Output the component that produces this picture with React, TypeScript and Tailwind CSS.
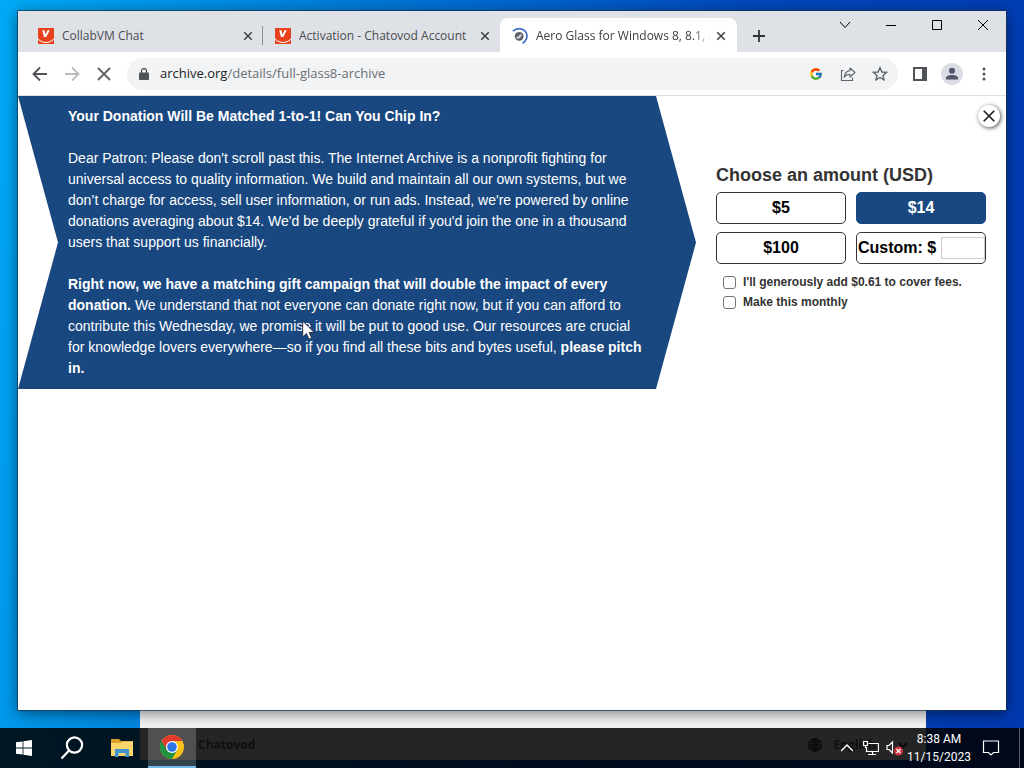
import type { ReactNode } from "react";
import { FcGoogle } from "react-icons/fc";

function ChatovodIcon() {
  return (
    <svg className="h-4 w-4 shrink-0" viewBox="0 0 16 16" aria-hidden="true">
      <rect width="16" height="16" fill="#e8421c" />
      <path d="M0 10.2C4 15.2 12 15.2 16 10.2L16 11.6C12 16.2 4 16.2 0 11.6Z" fill="#fff" />
      <path d="M4.200 2.200H6.500L7.400 6.400L9.600 2.200H11.800L8.200 9H6Z" fill="#fff" />
    </svg>
  );
}

function LoadingIcon() {
  return (
    <svg className="h-4 w-4 shrink-0" viewBox="0 0 16 16" fill="none" aria-hidden="true">
      <path d="M1 3.2C5 -.8 11.500 .2 13.900 4.200C16 8 14.800 13 10.500 15.200" stroke="#3567c8" strokeWidth="1.600" />
      <circle cx="7.200" cy="8.300" r="4.400" fill="#5b6068" />
      <path d="M4.600 10.800C3.600 8.800 5.400 8.900 6.600 8.300C7.600 7.600 7 6.600 8.600 6.200C10 6.200 10.400 7.200 9.400 8C8.400 8.400 8.600 9.600 7.800 10.200Z" fill="#d5d9df" />
    </svg>
  );
}

function Cross({ className, width = 1.8 }: { className: string; width?: number }) {
  return (
    <svg className={className} viewBox="0 0 16 16" fill="none" stroke="currentColor" strokeWidth={width} aria-hidden="true">
      <path d="M2 2L14 14M14 2L2 14" />
    </svg>
  );
}

function Tab({ icon, title, active, divider }: { icon: ReactNode; title: string; active?: boolean; divider?: boolean }) {
  return (
    <div
      role="tab"
      aria-selected={!!active}
      className={
        active
          ? "relative flex h-[34px] w-[237px] items-center gap-2 rounded-t-lg bg-white pt-[2px] pr-[10px] pl-3 text-[#3c4043]"
          : "relative flex h-[34px] w-[237px] items-center gap-2 pt-[2px] pr-[9px] pl-3 text-[#4a4d51]"
      }
    >
      {icon}
      <span
        className={
          active
            ? "-mr-1 min-w-0 flex-1 overflow-hidden text-xs whitespace-nowrap [mask-image:linear-gradient(to_right,black_90%,transparent)]"
            : "min-w-0 flex-1 overflow-hidden text-xs whitespace-nowrap"
        }
      >
        {title}
      </span>
      <button aria-label="Close tab" className="flex h-3 w-3 items-center justify-center text-[#3c4043]">
        <Cross className="h-[10px] w-[10px]" width={2.4} />
      </button>
      {divider && <span className="absolute top-2 right-0 h-[19px] w-px bg-[#8a8d91]" />}
    </div>
  );
}

function CaptionButton({ label, children }: { label: string; children: ReactNode }) {
  return (
    <button aria-label={label} className="flex h-[27px] w-[46px] items-center justify-center text-black">
      <svg className="h-3 w-3" viewBox="0 0 12 12" fill="none" stroke="currentColor" strokeWidth="1" aria-hidden="true">
        {children}
      </svg>
    </button>
  );
}

function TabStrip() {
  return (
    <div className="flex h-[41px] items-start justify-between bg-[#dee1e6]">
      <div className="flex items-center self-end pl-2" role="tablist">
        <Tab icon={<ChatovodIcon />} title="CollabVM Chat" divider />
        <Tab icon={<ChatovodIcon />} title="Activation - Chatovod Account" />
        <Tab icon={<LoadingIcon />} title="Aero Glass for Windows 8, 8.1, and 10" active />
        <button aria-label="New tab" className="ml-2 flex h-7 w-7 items-center justify-center pt-[2px] text-[#2f3236]">
          <svg className="h-3 w-3" viewBox="0 0 12 12" stroke="currentColor" strokeWidth="1.800" aria-hidden="true">
            <path d="M6 0V12M0 6H12" />
          </svg>
        </button>
      </div>
      <div className="flex">
        <CaptionButton label="Search tabs">
          <path d="M1 3L6 8.500L11 3" />
        </CaptionButton>
        <CaptionButton label="Minimize">
          <path d="M1 6.500H11" />
        </CaptionButton>
        <CaptionButton label="Maximize">
          <path d="M1.500 1.500H10.500V10.500H1.500Z" />
        </CaptionButton>
        <CaptionButton label="Close">
          <path d="M1 1L11 11M11 1L1 11" />
        </CaptionButton>
      </div>
    </div>
  );
}

function ToolButton({ label, children }: { label: string; children: ReactNode }) {
  return (
    <button aria-label={label} className="flex h-8 w-8 shrink-0 items-center justify-center text-[#5f6368]">
      {children}
    </button>
  );
}

function Toolbar() {
  return (
    <div className="flex h-11 items-center border-b border-[#dcdfe3] bg-white px-[6px]">
      <ToolButton label="Back">
        <svg className="h-4 w-4" viewBox="0 0 16 16" fill="none" stroke="#505357" strokeWidth="1.800" aria-hidden="true">
          <path d="M15 8H2M8 1.500L1.500 8L8 14.500" />
        </svg>
      </ToolButton>
      <ToolButton label="Forward">
        <svg className="h-4 w-4" viewBox="0 0 16 16" fill="none" stroke="#babcbe" strokeWidth="1.800" aria-hidden="true">
          <path d="M1 8H14M8 1.500L14.500 8L8 14.500" />
        </svg>
      </ToolButton>
      <ToolButton label="Stop loading">
        <Cross className="h-4 w-4" width={1.8} />
      </ToolButton>
      <div className="ml-[7px] flex h-8 min-w-0 flex-1 items-center rounded-full bg-[#f1f3f4] pl-3">
        <svg className="h-3 w-[10px] shrink-0" viewBox="0 0 10 12" aria-hidden="true">
          <path d="M2.500 5V3A2.500 2.500 0 0 1 7.500 3V5" fill="none" stroke="#505357" strokeWidth="1.300" />
          <rect y="4.500" width="10" height="7.500" rx="1" fill="#505357" />
        </svg>
        <a href="#page" className="ml-[11px] flex-1 truncate text-[13px] text-[#6a6e73]">
          <span className="text-[#202124]">archive.org</span>/details/full-glass8-archive
        </a>
        <ToolButton label="Search with Google">
          <FcGoogle className="h-[14px] w-[14px]" />
        </ToolButton>
        <ToolButton label="Share">
          <svg className="h-4 w-4" viewBox="0 0 16 16" fill="none" stroke="currentColor" strokeWidth="1.100" aria-hidden="true">
            <path d="M3.500 4.500H1.500V14.500H12.500V11.500" />
            <path d="M10 2L15 6.500L10 11V8.300C7 8.300 5.500 9.200 4.200 11.300C4.600 7.600 6.500 5 10 4.600Z" strokeLinejoin="round" />
          </svg>
        </ToolButton>
        <ToolButton label="Bookmark this tab">
          <svg className="h-4 w-4" viewBox="0 0 16 16" fill="none" stroke="currentColor" strokeWidth="1.400" aria-hidden="true">
            <path d="M8 1.800L9.900 6L14.400 6.400L11 9.400L12 13.900L8 11.500L4 13.900L5 9.400L1.600 6.400L6.100 6Z" />
          </svg>
        </ToolButton>
        <span className="w-[2px]" />
      </div>
      <div className="ml-[6px] flex">
        <ToolButton label="Side panel">
          <svg className="h-[14px] w-[14px]" viewBox="0 0 14 14" aria-hidden="true">
            <path d="M0 0H14V14H0ZM2 2V12H9V2Z" fill="#505357" fillRule="evenodd" />
          </svg>
        </ToolButton>
        <ToolButton label="Profile">
          <svg className="h-[22px] w-[22px]" viewBox="0 0 22 22" aria-hidden="true">
            <circle cx="11" cy="11" r="11" fill="#dadde4" />
            <circle cx="11" cy="7.700" r="3" fill="#4d5566" />
            <path d="M5 16.500V15C5 12.800 8.500 12 11 12S17 12.800 17 15V16.500Z" fill="#4d5566" />
          </svg>
        </ToolButton>
        <ToolButton label="Menu">
          <svg className="h-4 w-4" viewBox="0 0 16 16" fill="#505357" aria-hidden="true">
            <circle cx="8" cy="3" r="1.500" />
            <circle cx="8" cy="8" r="1.500" />
            <circle cx="8" cy="13" r="1.500" />
          </svg>
        </ToolButton>
      </div>
    </div>
  );
}

function DonationForm() {
  const amount = "h-8 rounded-[5px] border border-[#333] bg-white text-base font-bold text-black";
  const box = "h-[13px] w-[13px] appearance-none rounded-[3px] border border-[#767676] bg-white";
  return (
    <form className="w-[270px] shrink-0 pt-[68px] text-[#333]">
      <h2 className="text-lg leading-[22px] font-bold">Choose an amount (USD)</h2>
      <div className="mt-[6px] grid grid-cols-2 gap-x-[10px] gap-y-2">
        <button type="button" className={amount}>$5</button>
        <button type="button" className="h-8 rounded-[5px] border border-[#194880] bg-[#194880] text-base font-bold text-white">
          $14
        </button>
        <button type="button" className={amount}>$100</button>
        <label className="flex h-8 items-center justify-between rounded-[5px] border border-[#333] pl-px text-base font-bold whitespace-nowrap text-black">
          Custom: $
          <input type="text" aria-label="Custom amount" className="h-[22px] w-11 border border-[#ccc] bg-white px-1 text-sm outline-none" />
        </label>
      </div>
      <div className="mt-2 flex flex-col pl-[7px] text-xs leading-5 font-bold">
        <label className="flex items-center gap-[7px]">
          <input type="checkbox" className={box} />
          I'll generously add $0.61 to cover fees.
        </label>
        <label className="flex items-center gap-[7px]">
          <input type="checkbox" className={box} />
          Make this monthly
        </label>
      </div>
    </form>
  );
}

function Page() {
  return (
    <main id="page" className="relative flex-1 bg-white font-['Liberation_Sans',Arial,sans-serif]">
      <section className="flex items-start gap-5 pr-5">
        <div className="min-w-0 flex-1 bg-[#194880] px-[50px] py-[10px] text-sm leading-[21px] text-white [clip-path:polygon(0_0,calc(100%-40px)_0,100%_50%,calc(100%-40px)_100%,0_100%,40px_50%)]">
          <p className="font-bold">Your Donation Will Be Matched 1-to-1! Can You Chip In?</p>
          <p className="mt-[21px]">
            Dear Patron: Please don't scroll past this. The Internet Archive is a nonprofit fighting for universal access
            to quality information. We build and maintain all our own systems, but we don’t charge for access, sell user
            information, or run ads. Instead, we're powered by online donations averaging about $14. We'd be deeply
            grateful if you'd join the one in a thousand users that support us financially.
          </p>
          <p className="mt-[21px]">
            <b>Right now, we have a matching gift campaign that will double the impact of every donation.</b> We
            understand that not everyone can donate right now, but if you can afford to contribute this Wednesday, we
            promise it will be put to good use. Our resources are crucial for knowledge lovers everywhere—so if you find
            all these bits and bytes useful, <b>please pitch in.</b>
          </p>
        </div>
        <DonationForm />
      </section>
      <button
        aria-label="Close banner"
        className="absolute top-[9px] right-[6px] flex h-[22px] w-[22px] items-center justify-center rounded-full bg-white text-[#222] shadow-[1px_1px_4px_rgba(0,0,0,0.7)]"
      >
        <Cross className="h-[14px] w-[14px]" width={2} />
      </button>
      <svg className="absolute top-[224px] left-[284px] h-5 w-[13px]" viewBox="0 0 13 20" aria-hidden="true">
        <path d="M.7 1V17L4.400 13.500L7 19.200L9.700 18L7.200 12.500H12.200Z" fill="#fff" stroke="#223" strokeWidth=".9" />
      </svg>
    </main>
  );
}

function BackgroundWindow() {
  return (
    <div className="absolute right-[98px] bottom-2 left-[140px] flex h-[60px] items-end justify-between bg-[#f4f4f4] pr-[18px] pb-[7px] pl-[58px] text-xs font-bold text-[#666]">
      <span>Chatovod</span>
      <span className="flex items-center">
        <svg className="h-[14px] w-[14px]" viewBox="0 0 14 14" fill="none" stroke="#444" strokeWidth="1.300" aria-hidden="true">
          <circle cx="7" cy="7" r="6.300" />
          <path d="M.7 7H13.300M7 .7V13.300M7 .7C3.500 4 3.500 10 7 13.300C10.500 10 10.500 4 7 .7M1.500 4H12.500M1.500 10H12.500" />
        </svg>
        <span className="mr-[22px] ml-[11px]">English</span>
        <svg className="h-[10px] w-[10px]" viewBox="0 0 10 10" fill="none" stroke="#444" strokeWidth="2" aria-hidden="true">
          <path d="M1 3L5 7L9 3" />
        </svg>
      </span>
    </div>
  );
}

function Taskbar() {
  return (
    <footer className="relative flex h-10 items-center justify-between bg-black/85 text-white">
      <nav className="flex h-full items-center">
        <button aria-label="Start" className="flex h-full w-12 items-center justify-center">
          <svg className="h-4 w-4" viewBox="0 0 16 16" fill="#fff" aria-hidden="true">
            <path d="M0 2.300L6.600 1.400V7.600H0ZM7.400 1.300L16 0V7.600H7.400ZM0 8.400H6.600V14.600L0 13.700ZM7.400 8.400H16V16L7.400 14.700Z" />
          </svg>
        </button>
        <button aria-label="Search" className="flex h-full w-12 items-center justify-center">
          <svg className="h-6 w-6" viewBox="0 0 24 24" fill="none" stroke="#fff" strokeWidth="2.200" aria-hidden="true">
            <circle cx="14.500" cy="9" r="7.600" />
            <path d="M9.300 14.200L1.500 22.500" />
          </svg>
        </button>
        <button aria-label="File Explorer" className="flex h-full w-[52px] items-center justify-center">
          <svg className="h-5 w-[22px]" viewBox="0 0 22 20" aria-hidden="true">
            <path d="M0 1H8L10 3H22V18H0Z" fill="#d9a12c" />
            <path d="M0 5H10L12 3.500H22V18H0Z" fill="#fbd66d" />
            <path d="M4 11H18V19H14.500V15H7.500V19H4Z" fill="#4393cf" />
          </svg>
        </button>
        <button aria-label="Google Chrome" className="flex h-full w-12 items-center justify-center border-b-2 border-[#76b9ed] bg-white/20">
          <svg className="h-6 w-6" viewBox="0 0 24 24" aria-hidden="true">
            <circle cx="12" cy="12" r="12" fill="#fbc116" />
            <path d="M12 12L1.600 6A12 12 0 0 0 12 24L17.200 15Z" fill="#229342" />
            <path d="M12 12L6.800 15L1.600 6A12 12 0 0 1 22.400 6H12Z" fill="#e33b2e" />
            <circle cx="12" cy="12" r="6" fill="#fff" />
            <circle cx="12" cy="12" r="4.800" fill="#2d73e8" />
          </svg>
        </button>
      </nav>
      <div className="flex h-full items-center">
        <button aria-label="Show hidden icons" className="flex h-full w-6 items-center justify-center">
          <svg className="h-3 w-3" viewBox="0 0 12 12" fill="none" stroke="#fff" strokeWidth="1.500" aria-hidden="true">
            <path d="M0 9L6 3L12 9" />
          </svg>
        </button>
        <button aria-label="Network" className="flex h-full w-6 items-center justify-center">
          <svg className="h-4 w-4" viewBox="0 0 16 16" fill="none" stroke="#fff" strokeWidth="1.200" aria-hidden="true">
            <path d="M5.500 3.500H15.500V11.500H3.500V7M9.500 11.500V14.500M5 14.500H13" />
            <path d="M.6 1.500H4.400V5.500H.6ZM2.500 5.500V8" />
          </svg>
        </button>
        <button aria-label="Volume muted" className="flex h-full w-6 items-center justify-center">
          <svg className="h-4 w-[18px]" viewBox="0 0 18 16" fill="none" stroke="#fff" strokeWidth="1.200" aria-hidden="true">
            <path d="M1 5.500H3L6.500 2V13L3 9.500H1Z" />
            <circle cx="12.500" cy="11" r="4.500" fill="#d03340" stroke="none" />
            <path d="M10.500 9L14.500 13M14.500 9L10.500 13" />
          </svg>
        </button>
        <button className="flex w-16 flex-col items-center font-['Roboto',sans-serif] text-xs leading-[18px]">
          <time>8:38 AM</time>
          <time>11/15/2023</time>
        </button>
        <button aria-label="Notifications" className="flex h-full w-10 items-center justify-center">
          <svg className="h-[18px] w-[18px]" viewBox="0 0 18 18" fill="none" stroke="#fff" strokeWidth="1.200" aria-hidden="true">
            <path d="M1.500 2H16.500V13.500H11.500L9 16L6.500 13.500H1.500Z" />
          </svg>
        </button>
        <span className="ml-2 h-full w-px bg-[#596070]" />
        <span className="w-1" />
      </div>
    </footer>
  );
}

export default function App() {
  return (
    <div className="relative flex min-h-screen flex-col bg-[linear-gradient(100deg,#00aaf5_0%,#0078d8_32%,#0048bc_65%,#0038ae_100%)] pt-[11px] font-['Open_Sans','Noto_Sans',sans-serif]">
      <BackgroundWindow />
      <div className="relative mx-[18px] mb-[18px] flex flex-1 flex-col shadow-[0_0_0_1px_rgba(20,50,70,0.7),0_3px_14px_rgba(0,0,0,0.5)]">
        <TabStrip />
        <Toolbar />
        <Page />
      </div>
      <Taskbar />
    </div>
  );
}
